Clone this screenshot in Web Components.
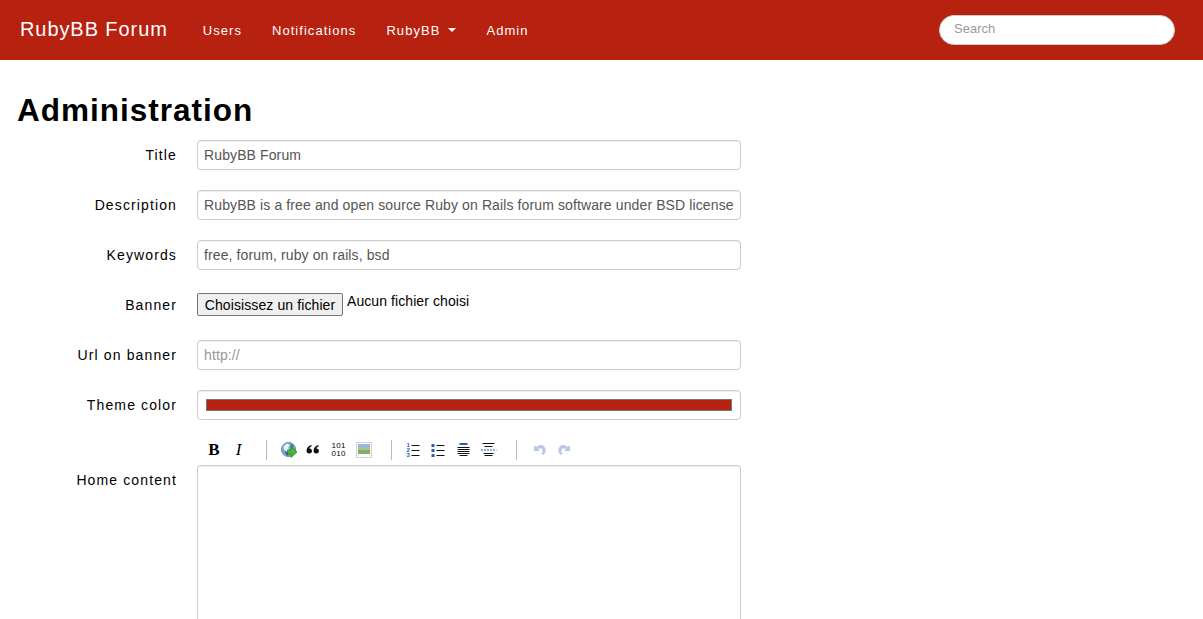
<!DOCTYPE html>
<html>
<head>
<meta charset="utf-8">
<title>RubyBB Forum</title>
<style>
    html, body { margin: 0; height: 619px; overflow: hidden; background: #fff; }
    body { font-family: "Liberation Sans", Arial, sans-serif; font-size: 14px; color: #000; }
</style>
</head>
<body>
<forum-navbar>
    <nav-link>Users</nav-link>
    <nav-link>Notifications</nav-link>
    <nav-link caret>RubyBB</nav-link>
    <nav-link>Admin</nav-link>
</forum-navbar>
<admin-page>
    <form-row label="Title"><text-field>RubyBB Forum</text-field></form-row>
    <form-row label="Description"><text-field>RubyBB is a free and open source Ruby on Rails forum software under BSD license</text-field></form-row>
    <form-row label="Keywords"><text-field>free, forum, ruby on rails, bsd</text-field></form-row>
    <form-row label="Banner"><file-picker></file-picker></form-row>
    <form-row label="Url on banner"><text-field placeholder>http://</text-field></form-row>
    <form-row label="Theme color"><color-field></color-field></form-row>
    <editor-row label="Home content"></editor-row>
</admin-page>

<script>
class ForumNavbar extends HTMLElement {
    constructor() {
        super();
        this.attachShadow({ mode: 'open' });
        this.shadowRoot.innerHTML = `
            <style>
                :host { display: flex; align-items: center; height: 60px; background: #b72110; padding: 0 28px 0 20px; }
                .brand { font-size: 20px; letter-spacing: 0.92px; color: #fff; margin-right: 35px; margin-top: -1px; }
                .links { display: flex; gap: 30px; }
                .search {
                    margin-left: auto; box-sizing: border-box; width: 236px; height: 30px;
                    background: #fff; border: 1px solid #ccc; border-radius: 15px;
                    padding: 0 14px; font-size: 13px; line-height: 26px; color: #999;
                }
            </style>
            <div class="brand">RubyBB Forum</div>
            <div class="links"><slot></slot></div>
            <div class="search">Search</div>
        `;
    }
}

class NavLink extends HTMLElement {
    constructor() {
        super();
        this.attachShadow({ mode: 'open' });
        this.shadowRoot.innerHTML = `
            <style>
                :host { display: flex; align-items: center; font-size: 13px; letter-spacing: 1.05px; color: #fff; }
                .caret { display: none; width: 0; height: 0; margin-left: 8px; border: 4px solid transparent; border-top-color: #fff; border-bottom: 0; }
                :host([caret]) .caret { display: block; }
            </style>
            <slot></slot><span class="caret"></span>
        `;
    }
}

class AdminPage extends HTMLElement {
    constructor() {
        super();
        this.attachShadow({ mode: 'open' });
        this.shadowRoot.innerHTML = `
            <style>
                :host { display: block; padding: 0 17px; }
                h1 { margin: 0; padding-top: 30px; height: 50px; font-size: 31.5px; line-height: 40px; letter-spacing: 1px; font-weight: bold; }
            </style>
            <h1>Administration</h1>
            <slot></slot>
        `;
    }
}

class FormRow extends HTMLElement {
    constructor() {
        super();
        this.attachShadow({ mode: 'open' });
        this.shadowRoot.innerHTML = `
            <style>
                :host { display: grid; grid-template-columns: 160px 544px; column-gap: 20px; height: 30px; margin-bottom: 20px; }
                label { text-align: right; line-height: 30px; letter-spacing: 1.12px; color: #000; }
            </style>
            <label></label>
            <div><slot></slot></div>
        `;
    }

    connectedCallback() {
        this.shadowRoot.querySelector('label').textContent = this.getAttribute('label') || '';
    }
}

class TextField extends HTMLElement {
    constructor() {
        super();
        this.attachShadow({ mode: 'open' });
        this.shadowRoot.innerHTML = `
            <style>
                :host {
                    display: block; box-sizing: border-box; height: 30px; padding: 0 6px;
                    background: #fff; border: 1px solid #ccc; border-radius: 4px;
                    box-shadow: inset 0 1px 1px rgba(0,0,0,0.075);
                    line-height: 28px; letter-spacing: 0.115px; color: #555; white-space: nowrap; overflow: hidden;
                }
                :host([placeholder]) { color: #999; }
            </style>
            <slot></slot>
        `;
    }
}

class FilePicker extends HTMLElement {
    constructor() {
        super();
        this.attachShadow({ mode: 'open' });
        this.shadowRoot.innerHTML = `
            <style>
                :host { display: flex; align-items: flex-start; padding-top: 3px; }
                button {
                    box-sizing: border-box; width: 146px; height: 23px; padding: 0; margin-right: 4px;
                    font: 14px "Liberation Sans", Arial, sans-serif; letter-spacing: 0.1px; color: #000;
                    background: #efefef; border: 1px solid #767676; border-radius: 2px;
                }
                span { line-height: 16px; letter-spacing: 0.08px; color: #000; }
            </style>
            <button type="button">Choisissez un fichier</button>
            <span>Aucun fichier choisi</span>
        `;
    }
}

class ColorField extends HTMLElement {
    constructor() {
        super();
        this.attachShadow({ mode: 'open' });
        this.shadowRoot.innerHTML = `
            <style>
                :host {
                    display: block; box-sizing: border-box; height: 30px; padding: 8px;
                    background: #fff; border: 1px solid #ccc; border-radius: 4px;
                    box-shadow: inset 0 1px 1px rgba(0,0,0,0.075);
                }
                div { box-sizing: border-box; height: 12px; background: #b72110; border: 1px solid #777; }
            </style>
            <div></div>
        `;
    }
}

class ToolIcon extends HTMLElement {
    constructor() {
        super();
        this.attachShadow({ mode: 'open' });
        this.shadowRoot.innerHTML = `
            <style>
                :host { display: flex; align-items: center; justify-content: center; width: 25px; height: 20px; }
                svg { display: block; width: 16px; height: 16px; }
                text { font-family: "Liberation Sans", Arial, sans-serif; }
            </style>
            <svg viewBox="0 0 16 16">${ToolIcon.shapes[this.getAttribute('name')] || ''}</svg>
        `;
    }
}

const UNDO_PATH = 'M3 3 V9 H9 L7 7 C8 6 10 6 11 7 C12 8 12 10 10.5 12 L12 13 C15 11 15.5 7 13 4.5 C11 2.5 7.5 2.5 5.2 5.2 Z';

ToolIcon.shapes = {
    link: `
        <circle cx="7.5" cy="7.5" r="7" fill="#7aaed8" stroke="#5d86ab" stroke-width="1"/>
        <path d="M2.5 4.5 L6 1.5 L9 3 L7 6 L8 8 L6 10 L3 7.5 Z" fill="#eef3f7"/>
        <path d="M9.5 1.5 L13 4 L11 5.5 L9.5 4.5 Z" fill="#3f8a4c"/>
        <path d="M3.5 9 L7 10.5 L7.5 14 L5 13 Z" fill="#2f6fa8"/>
        <path d="M6.5 8 H10 V4.5 L16 10 L10 15.5 V12 H6.5 Z" fill="#4cb83a" stroke="#25761f" stroke-width="0.7"/>
    `,
    quote: `
        <path d="M0.5 9 C0.5 6 2.5 3.5 5.5 3 L5.5 4.5 C4.3 4.8 3.5 5.5 3.5 6.5 C5 6.5 6 7.5 6 9 C6 10.5 4.8 11.5 3.3 11.5 C1.7 11.5 0.5 10.5 0.5 9 Z" fill="#111"/>
        <path d="M7.5 9 C7.5 6 9.5 3.5 12.5 3 L12.5 4.5 C11.3 4.8 10.5 5.5 10.5 6.5 C12 6.5 13 7.5 13 9 C13 10.5 11.8 11.5 10.3 11.5 C8.7 11.5 7.5 10.5 7.5 9 Z" fill="#111"/>
    `,
    code: `
        <text x="0.5" y="6" font-size="8" textLength="14" fill="#000">101</text>
        <text x="0.5" y="14" font-size="8" textLength="14" fill="#000">010</text>
    `,
    image: `
        <rect x="0.5" y="0.5" width="15" height="15" fill="#fff" stroke="#d0d0d0"/>
        <rect x="2" y="2" width="12" height="5" fill="#9db7d8"/>
        <rect x="2" y="7" width="12" height="5" fill="#84ab68"/>
        <rect x="2" y="6" width="12" height="2" fill="#a6c29a"/>
    `,
    ol: `
        <text x="0.5" y="5" font-size="6" font-weight="bold" fill="#2f5cb8">1</text>
        <text x="0.5" y="10" font-size="6" font-weight="bold" fill="#2f5cb8">2</text>
        <text x="0.5" y="15" font-size="6" font-weight="bold" fill="#2f5cb8">3</text>
        <path d="M5.5 3.5 H13.5 M5.5 8.5 H13.5 M5.5 13.5 H13.5" stroke="#111" stroke-width="1"/>
    `,
    ul: `
        <rect x="0.5" y="2" width="3" height="3" fill="#2f5cb8"/>
        <rect x="0.5" y="7" width="3" height="3" fill="#2f5cb8"/>
        <rect x="0.5" y="12" width="3" height="3" fill="#2f5cb8"/>
        <path d="M5.5 3.5 H13.5 M5.5 8.5 H13.5 M5.5 13.5 H13.5" stroke="#111" stroke-width="1"/>
    `,
    indent: `
        <rect x="3.5" y="1" width="8" height="2" fill="#2f5cb8"/>
        <path d="M1.5 5.5 H13.5 M1.5 7.5 H13.5 M1.5 9.5 H13.5 M1.5 11.5 H13.5 M3.5 13.5 H11.5" stroke="#111" stroke-width="1"/>
    `,
    rule: `
        <path d="M1.5 1.5 H13.5 M3.5 4.5 H11.5 M2.5 11.5 H12.5 M3.5 13.5 H11.5" stroke="#111" stroke-width="1"/>
        <path d="M0 8 H15.5" stroke="#2f5cb8" stroke-width="1" stroke-dasharray="2 1"/>
    `,
    undo: `<path d="${UNDO_PATH}" fill="#b9c6e2"/>`,
    redo: `<path d="${UNDO_PATH}" fill="#b9c6e2" transform="translate(17,0) scale(-1,1)"/>`
};

class EditorToolbar extends HTMLElement {
    constructor() {
        super();
        this.attachShadow({ mode: 'open' });
        this.shadowRoot.innerHTML = `
            <style>
                :host { display: flex; height: 20px; padding-left: 5px; }
                .cell { display: flex; align-items: center; justify-content: center; width: 25px; height: 20px; font-family: "Liberation Serif", "Times New Roman", serif; color: #000; }
                .bold { font-weight: bold; font-size: 17px; padding-right: 1px; width: 24px; }
                .italic { font-style: italic; font-size: 17px; padding-right: 2px; width: 23px; }
                .sep { width: 1px; height: 20px; background: #bbb; margin: 0 9px 0 15px; }
                .sep.first { margin-left: 14px; }
            </style>
            <div class="cell bold">B</div>
            <div class="cell italic">I</div>
            <div class="sep first"></div>
            <tool-icon name="link"></tool-icon>
            <tool-icon name="quote"></tool-icon>
            <tool-icon name="code"></tool-icon>
            <tool-icon name="image"></tool-icon>
            <div class="sep"></div>
            <tool-icon name="ol"></tool-icon>
            <tool-icon name="ul"></tool-icon>
            <tool-icon name="indent"></tool-icon>
            <tool-icon name="rule"></tool-icon>
            <div class="sep"></div>
            <tool-icon name="undo"></tool-icon>
            <tool-icon name="redo"></tool-icon>
        `;
    }
}

class EditorRow extends HTMLElement {
    constructor() {
        super();
        this.attachShadow({ mode: 'open' });
        this.shadowRoot.innerHTML = `
            <style>
                :host { display: grid; grid-template-columns: 160px 544px; grid-template-rows: 20px auto; column-gap: 20px; row-gap: 5px; }
                editor-toolbar { grid-column: 2; grid-row: 1; }
                label { grid-column: 1; grid-row: 2; text-align: right; line-height: 30px; letter-spacing: 1.12px; }
                .box {
                    grid-column: 2; grid-row: 2; box-sizing: border-box; height: 154px;
                    background: #fff; border: 1px solid #ccc; border-bottom: 0; border-radius: 4px 4px 0 0;
                    box-shadow: inset 0 1px 1px rgba(0,0,0,0.075);
                }
            </style>
            <editor-toolbar></editor-toolbar>
            <label></label>
            <div class="box"></div>
        `;
    }

    connectedCallback() {
        this.shadowRoot.querySelector('label').textContent = this.getAttribute('label') || '';
    }
}

customElements.define('tool-icon', ToolIcon);
customElements.define('editor-toolbar', EditorToolbar);
customElements.define('forum-navbar', ForumNavbar);
customElements.define('nav-link', NavLink);
customElements.define('admin-page', AdminPage);
customElements.define('form-row', FormRow);
customElements.define('text-field', TextField);
customElements.define('file-picker', FilePicker);
customElements.define('color-field', ColorField);
customElements.define('editor-row', EditorRow);
</script>
</body>
</html>
